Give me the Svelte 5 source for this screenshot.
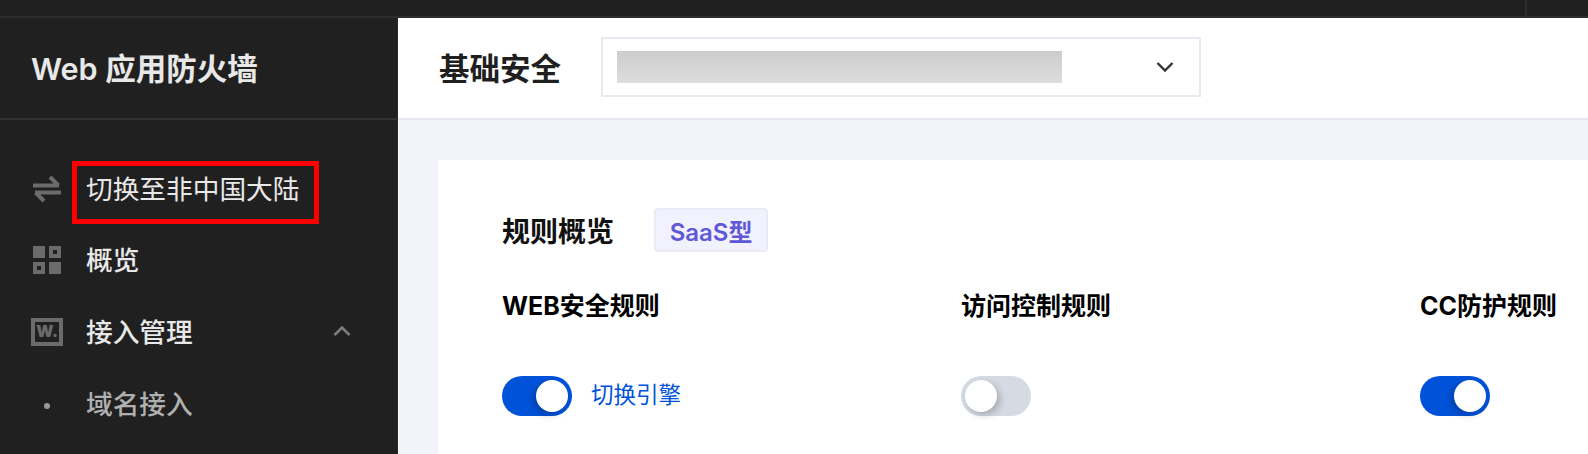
<script>
  const rules = [
    { name: 'WEB安全规则', on: true, link: '切换引擎' },
    { name: '访问控制规则', on: false },
    { name: 'CC防护规则', on: true }
  ]
</script>

<div class="page">
  <div class="topbar"><span class="topbar-sep"></span></div>
  <div class="body">
    <aside class="sidebar">
      <div class="brand">Web 应用防火墙</div>
      <nav class="menu">
        <div class="item">
          <span class="icon">
            <svg width="32" height="32" viewBox="0 0 32 32" fill="none" stroke="#6b6b6b" stroke-width="4">
              <path d="M2 12.5h26M19 4l8.500 8.500M30 19.500H4M13 28l-8.500-8.500" />
            </svg>
          </span>
          <span class="label highlighted">切换至非中国大陆</span>
        </div>
        <div class="item">
          <span class="icon">
            <svg width="32" height="32" viewBox="0 0 32 32" fill="#6b6b6b">
              <rect x="2" y="2" width="12" height="12" />
              <path fill-rule="evenodd" d="M18 2h12v12H18zM22 6v4h4V6z" />
              <path fill-rule="evenodd" d="M2 18h12v12H2zM6 22v4h4v-4z" />
              <rect x="18" y="18" width="12" height="12" />
            </svg>
          </span>
          <span class="label strong">概览</span>
        </div>
        <div class="item">
          <span class="icon">
            <span class="w-icon">W.</span>
          </span>
          <span class="label strong">接入管理</span>
          <svg class="caret" width="18" height="12" viewBox="0 0 18 12" fill="none" stroke="#7d7d7d" stroke-width="2.6">
            <path d="M1.5 10L9 2.5 16.5 10" />
          </svg>
        </div>
        <div class="item sub">
          <span class="icon"><span class="dot"></span></span>
          <span class="label">域名接入</span>
        </div>
      </nav>
    </aside>

    <main class="main">
      <header class="header">
        <h1>基础安全</h1>
        <div class="select">
          <div class="redacted"></div>
          <svg width="18" height="12" viewBox="0 0 18 12" fill="none" stroke="#333" stroke-width="2.4">
            <path d="M1.5 2L9 9.5 16.5 2" />
          </svg>
        </div>
      </header>
      <div class="content">
        <section class="card">
          <div class="card-title">
            <h2>规则概览</h2>
            <span class="badge">SaaS型</span>
          </div>
          <div class="rules">
            {#each rules as rule}
              <div class="rule">
                <div class="rule-name">{rule.name}</div>
                <div class="rule-control">
                  <span class="toggle" class:on={rule.on}><span class="knob"></span></span>
                  {#if rule.link}<span class="link">{rule.link}</span>{/if}
                </div>
              </div>
            {/each}
          </div>
        </section>
      </div>
    </main>
  </div>
</div>

<style>
  :global(body) {
    margin: 0;
    overflow: hidden;
  }
  .page {
    width: 1588px;
    height: 454px;
    display: flex;
    flex-direction: column;
    overflow: hidden;
    font-family: Inter, "Noto Sans CJK SC", sans-serif;
  }
  .topbar {
    height: 16px;
    flex: none;
    background: #202020;
    border-bottom: 2px solid #2d2d2d;
    display: flex;
    justify-content: flex-end;
    padding-right: 61px;
  }
  .topbar-sep {
    width: 2px;
    background: #2d2d2d;
  }
  .body {
    flex: 1;
    display: flex;
    min-height: 0;
  }
  .sidebar {
    width: 398px;
    flex: none;
    background: #202020;
    border-right: 1px solid #2a2a2a;
    box-sizing: border-box;
    color: #e8e8e8;
  }
  .brand {
    height: 102px;
    box-sizing: border-box;
    border-bottom: 2px solid #333;
    padding: 0 0 2px 31px;
    display: flex;
    align-items: center;
    font-size: 30.5px;
    font-weight: 600;
  }
  .menu {
    padding-top: 33px;
  }
  .item {
    height: 71.5px;
    display: flex;
    align-items: center;
    padding-left: 30px;
    box-sizing: border-box;
    position: relative;
  }
  .icon {
    width: 34px;
    display: flex;
    justify-content: center;
    margin-right: 22px;
  }
  .label {
    font-size: 26.7px;
    line-height: 36px;
    color: #e8e8e8;
  }
  .strong {
    font-weight: 500;
  }
  .highlighted {
    position: relative;
  }
  .highlighted::after {
    content: "";
    position: absolute;
    left: -14px;
    top: -10px;
    width: 247px;
    height: 63px;
    box-sizing: border-box;
    border: 5px solid #f00;
  }
  .w-icon {
    width: 32px;
    height: 28px;
    box-sizing: border-box;
    border: 4px solid #6b6b6b;
    color: #6b6b6b;
    font-size: 16px;
    font-weight: 900;
    line-height: 19px;
    text-align: center;
    letter-spacing: 0;
  }
  .caret {
    position: absolute;
    left: 333px;
    top: 29px;
  }
  .sub {
    padding-top: 2px;
  }
  .sub .label {
    color: #b0b0b0;
    font-weight: 500;
  }
  .dot {
    width: 6px;
    height: 6px;
    margin-top: 4px;
    border-radius: 50%;
    background: #999;
  }
  .main {
    flex: 1;
    min-width: 0;
    background: #f2f3f8;
    display: flex;
    flex-direction: column;
  }
  .header {
    height: 102px;
    flex: none;
    box-sizing: border-box;
    background: #fff;
    border-bottom: 2px solid #e5e8ee;
    display: flex;
    align-items: center;
    padding: 0 0 2px 41px;
    gap: 40px;
  }
  h1 {
    margin: 0;
    font-size: 30.5px;
    font-weight: 700;
    color: #1f1f1f;
  }
  .select {
    width: 600px;
    height: 60px;
    box-sizing: border-box;
    border: 2px solid #e6e9f0;
    display: flex;
    align-items: center;
    justify-content: space-between;
    padding: 0 25px 0 14px;
  }
  .redacted {
    width: 445px;
    height: 32px;
    background: linear-gradient(#cdcdcd, #dddddd);
  }
  .content {
    flex: 1;
    padding: 40px 0 0 40px;
    min-height: 0;
  }
  .card {
    background: #fff;
    height: 100%;
    box-sizing: border-box;
    padding: 48px 0 0 64px;
  }
  .card-title {
    display: flex;
    align-items: center;
    gap: 40px;
    height: 44px;
  }
  h2 {
    margin: 0;
    font-size: 28px;
    font-weight: 700;
    color: #111;
  }
  .badge {
    height: 44px;
    width: 114px;
    box-sizing: border-box;
    display: flex;
    align-items: center;
    justify-content: center;
    background: #f2f1fe;
    border: 2px solid #ebebf6;
    border-radius: 4px;
    color: #5f59d6;
    font-size: 24px;
    font-weight: 600;
  }
  .rules {
    display: grid;
    grid-template-columns: repeat(3, 459px);
    margin-top: 36px;
  }
  .rule-name {
    font-size: 25px;
    line-height: 36px;
    font-weight: 700;
    color: #000;
    white-space: nowrap;
  }
  .rule-control {
    margin-top: 52px;
    display: flex;
    align-items: center;
    gap: 19px;
  }
  .toggle {
    width: 70px;
    height: 40px;
    border-radius: 20px;
    background: #d5dae3;
    display: flex;
    align-items: center;
    padding: 0 4px;
    box-sizing: border-box;
  }
  .toggle.on {
    background: #0052d9;
    justify-content: flex-end;
  }
  .knob {
    width: 32px;
    height: 32px;
    border-radius: 50%;
    background: #fff;
    box-shadow: 3px 3px 7px rgba(0, 0, 0, 0.22);
  }
  .on .knob {
    box-shadow: -3px 3px 7px rgba(0, 0, 0, 0.22);
  }
  .link {
    font-size: 22.5px;
    line-height: 32px;
    margin-bottom: 3px;
    color: #0052d9;
  }
</style>
